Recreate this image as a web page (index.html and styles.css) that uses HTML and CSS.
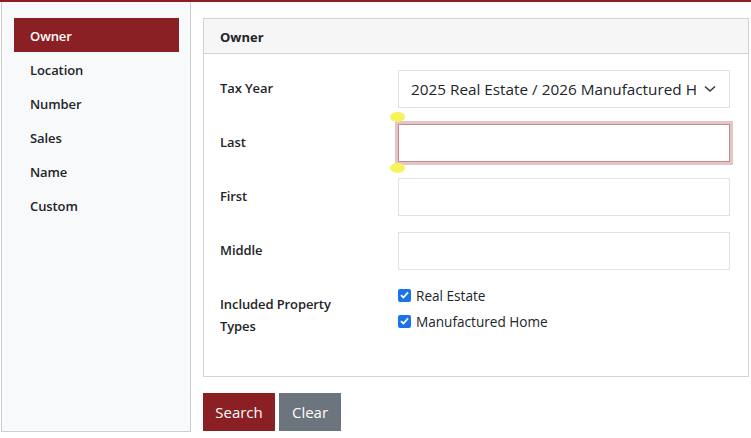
FILE: index.html
```html
<!DOCTYPE html>
<html>
<head>
<meta charset="utf-8">
<link rel="stylesheet" href="styles.css">
</head>
<body>
<div class="topbar"></div>
<div class="layout">
  <nav class="sidebar">
    <a class="nav-item active">Owner</a>
    <a class="nav-item">Location</a>
    <a class="nav-item">Number</a>
    <a class="nav-item">Sales</a>
    <a class="nav-item">Name</a>
    <a class="nav-item">Custom</a>
  </nav>
  <main class="main">
    <section class="panel">
      <header class="panel-head">Owner</header>
      <div class="panel-body">
        <label class="lbl">Tax Year</label>
        <div class="select">
          <span class="select-text">2025 Real Estate / 2026 Manufactured H</span>
          <svg class="chev" width="12" height="8" viewBox="0 0 12 8"><path d="M1 1.5 L6 6 L11 1.5" fill="none" stroke="#343a40" stroke-width="1.6"/></svg>
        </div>
        <label class="lbl">Last</label>
        <div class="field-wrap">
          <div class="input focus"></div>
          <span class="handle top"></span>
          <span class="handle bottom"></span>
        </div>
        <label class="lbl">First</label>
        <div class="input"></div>
        <label class="lbl">Middle</label>
        <div class="input"></div>
        <label class="lbl multi">Included Property<br>Types</label>
        <div class="checks">
          <div class="check"><span class="box"><svg width="9" height="8" viewBox="0 0 9 8"><path d="M1 4.2 L3.4 6.5 L8 1.3" fill="none" stroke="#fff" stroke-width="1.8"/></svg></span>Real Estate</div>
          <div class="check"><span class="box"><svg width="9" height="8" viewBox="0 0 9 8"><path d="M1 4.2 L3.4 6.5 L8 1.3" fill="none" stroke="#fff" stroke-width="1.8"/></svg></span>Manufactured Home</div>
        </div>
      </div>
    </section>
    <div class="actions">
      <button class="btn primary">Search</button>
      <button class="btn secondary">Clear</button>
    </div>
  </main>
</div>
</body>
</html>
```

FILE: styles.css
```css
* { box-sizing: border-box; }
html, body { margin: 0; padding: 0; background: #fff; }
body {
  font-family: "Open Sans", "Noto Sans", sans-serif;
  color: #212529;
  width: 751px;
  height: 438px;
  overflow: hidden;
}
.topbar { height: 2px; background: #8b1f23; }
.layout {
  display: flex;
  gap: 12px;
  padding-left: 1px;
  padding-right: 2px;
}
.sidebar {
  width: 190px;
  flex: none;
  height: 430px;
  background: #f8f9fa;
  border: 1px solid #cfcfcf;
  border-top: none;
  padding: 16px 11px 0 12px;
  display: flex;
  flex-direction: column;
}
.nav-item {
  display: block;
  height: 34px;
  line-height: 34px;
  padding: 1px 0 0 16px;
  font-size: 13px;
  font-weight: 600;
  color: #212529;
  letter-spacing: -0.1px;
}
.nav-item.active { background: #8b2024; color: #fff; }
.main { flex: 1; padding-top: 16px; }
.panel {
  border: 1px solid #d3d3d3;
  height: 359px;
}
.panel-head {
  height: 35px;
  background: #f6f6f6;
  border-bottom: 1px solid #d3d3d3;
  padding: 1px 0 0 16px;
  font-size: 13px;
  font-weight: 700;
  line-height: 34px;
}
.panel-body {
  display: grid;
  grid-template-columns: 178px 332px;
  row-gap: 16px;
  padding: 16px 0 0 16px;
}
.lbl {
  font-size: 13px;
  font-weight: 600;
  line-height: 36px;
  letter-spacing: -0.1px;
}
.lbl.multi { line-height: 22px; padding-top: 7px; }
.select, .input {
  height: 38px;
  border: 1px solid #dee2e6;
  background: #fff;
}
.select {
  display: flex;
  align-items: center;
  justify-content: space-between;
  padding: 0 13px 0 12px;
  font-size: 15.3px;
}
.select-text { white-space: nowrap; overflow: hidden; }
.chev { flex: none; margin-left: 8px; }
.field-wrap { position: relative; }
.input.focus {
  border-color: #c7898b;
  box-shadow: 0 0 0 3px #e4c5c6;
}
.handle {
  position: absolute;
  left: -8px;
  width: 15px;
  height: 10px;
  border-radius: 50%;
  background: #f7f35a;
}
.handle.top { top: -12px; }
.handle.bottom { bottom: -11px; }
.checks { margin-top: -4px; }
.check {
  display: flex;
  align-items: center;
  height: 26px;
  font-size: 13.6px;
  color: #212529;
}
.box {
  width: 13px;
  height: 13px;
  border-radius: 2px;
  background: #1a73e8;
  display: inline-flex;
  align-items: center;
  justify-content: center;
  margin-right: 5px;
  flex: none;
}
.actions { display: flex; gap: 4px; margin-top: 16px; }
.btn {
  height: 38px;
  border: none;
  color: #fff;
  font-family: inherit;
  font-size: 15px;
  padding: 0 12px;
  border-radius: 0;
}
.btn.primary { background: #8b2024; width: 72px; }
.btn.secondary { background: #6c757d; width: 62px; }
```
